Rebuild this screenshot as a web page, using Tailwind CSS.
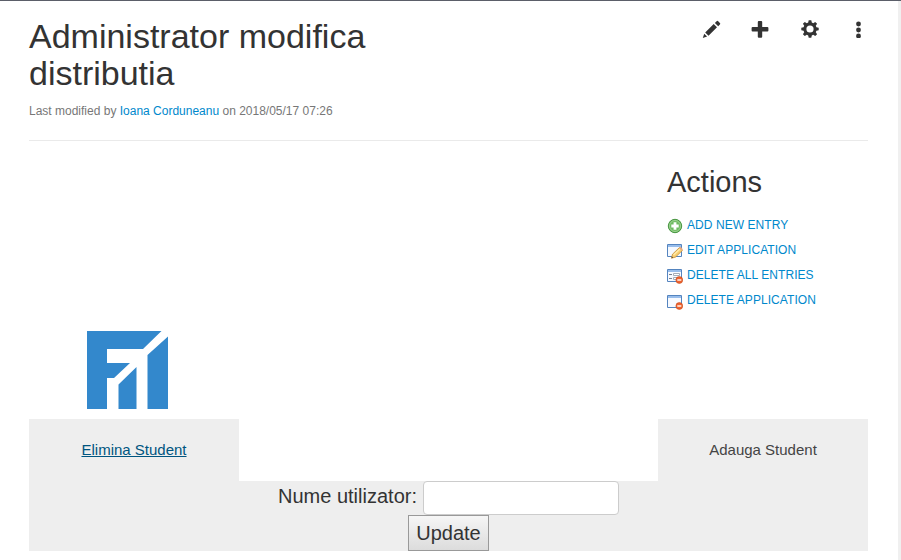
<!DOCTYPE html>
<html lang="ro">
<head>
<meta charset="utf-8">
<title>Administrator modifica distributia</title>
<script src="https://cdn.jsdelivr.net/npm/@tailwindcss/browser@4"></script>
</head>
<body class="h-[560px] w-[901px] overflow-hidden bg-white font-['Liberation_Sans',Arial,sans-serif] text-[15px] text-[#333]">
<div class="h-[560px] border-t border-[#5b5e69] flex">
<main class="w-[898px] shrink-0 pl-[29px] pr-[30px]">
  <header class="flex h-[140px] justify-between border-b border-[#eaeaea] pt-[17px]">
    <div class="w-[380px]">
      <h1 class="text-[34px] leading-[37px] [font-variant-ligatures:none]">Administrator modifica distributia</h1>
      <p class="mt-[11px] text-[12px] leading-[17px] text-[#777] whitespace-nowrap [font-variant-ligatures:none]">Last modified by <a href="#" class="text-[#0088cc]">Ioana Corduneanu</a> on 2018/05/17 07:26</p>
    </div>
    <nav class="flex h-[22px] items-center text-[#333]">
      <svg class="mr-[30px] h-5 w-5" viewBox="0 0 20 20" fill="currentColor"><path d="M1.800 19 3.200 14.700 6.100 17.600ZM4.200 13.400 12.700 5 16 8.300 7.500 16.700ZM13.900 3.900 15.600 2.200Q16.400 1.400 17.200 2.200L18.900 3.900Q19.700 4.700 18.900 5.500L17.200 7.200Z"/></svg>
      <svg class="mr-[32px] h-[18px] w-[18px]" viewBox="0 0 18 18" fill="currentColor"><path d="M7.800 1h2.400q1 0 1 1v5.100h5.200q1 0 1 1v2.500q0 1-1 1h-5.200v5.200q0 1-1 1H7.800q-1 0-1-1v-5.200H1.600q-1 0-1-1V8.100q0-1 1-1h5.200V2q0-1 1-1Z"/></svg>
      <svg class="mr-[31px] h-[18px] w-[18px]" viewBox="0 0 18 18" fill="currentColor" fill-rule="evenodd"><path d="M7.700.3h2.600l.5 2.300 1.400.6 2-1.300 1.900 1.900-1.300 2 .6 1.400 2.300.5v2.600l-2.300.5-.6 1.400 1.300 2-1.900 1.900-2-1.300-1.400.6-.5 2.300H7.700l-.5-2.300-1.400-.6-2 1.300-1.900-1.900 1.300-2-.6-1.400-2.300-.5V7.700l2.300-.5.6-1.400-1.300-2 1.900-1.900 2 1.300 1.400-.6ZM9 5.400a3.600 3.600 0 1 0 0 7.200 3.600 3.600 0 0 0 0-7.200Z"/></svg>
      <svg class="h-[18px] w-[18px]" viewBox="0 0 18 18" fill="currentColor"><circle cx="8.500" cy="4" r="2.400"/><circle cx="8.500" cy="10" r="2.400"/><circle cx="8.500" cy="16" r="2.400"/></svg>
    </nav>
  </header>

  <section class="flex h-[278px]">
    <div class="flex w-[210px] items-end pb-[9px] pl-[58px]">
      <svg class="h-[80px] w-[82px]" viewBox="87 330 82 80" fill="#3388cc"><path d="M87 331h74.500L143 349h-36v14h23l-16 15h-7v31H87ZM118.500 384.500 136.500 367v42h-18ZM147.500 355 168 336.500V409h-20.500Z"/></svg>
    </div>
    <aside class="ml-[428px] pt-[23px]">
      <h2 class="text-[29px] leading-[36px]">Actions</h2>
      <ul class="mt-[12.600px] text-[12px] leading-[25.3px] tracking-[0.06px] text-[#0088cc] whitespace-nowrap">
        <li class="flex h-[25.3px] items-center gap-[4px]">
          <svg class="mt-[1px] h-4 w-4" viewBox="0 0 16 16"><circle cx="8" cy="8" r="6.700" fill="#6fbb62" stroke="#489541"/><circle cx="8" cy="8" r="5.500" fill="none" stroke="#9ed293"/><path d="M6.600 4.300h2.800v2.300h2.300v2.800H9.400v2.300H6.600V9.400H4.300V6.600h2.300Z" fill="#fff"/></svg>
          <a href="#">ADD NEW ENTRY</a></li>
        <li class="flex h-[25.3px] items-center gap-[4px]">
          <svg class="mt-[1px] h-4 w-4" viewBox="0 0 16 16"><path d="M.5 1.500h14v12H.5Z" fill="#f5f9ff" stroke="#5484bf"/><path d="M1 2h13v2H1Z" fill="#98bdeb"/><path d="m4.500 15.200 1-4 7-6.700 3 2.800-7 6.800Z" fill="#f8cf72" stroke="#c58b33" stroke-width=".8"/><path d="m6.500 12 6.500-6" stroke="#ffedae" stroke-width="1.300"/><path d="m12 5 1.500-1.200 2.400 2.400-1.400 1.300Z" fill="#e7a77f"/><path d="m4.500 15.200.4-1.800 1.400 1.300Z" fill="#554a3c"/></svg>
          <a href="#">EDIT APPLICATION</a></li>
        <li class="flex h-[25.3px] items-center gap-[4px]">
          <svg class="mt-[1px] h-4 w-4" viewBox="0 0 16 16"><path d="M.5 1.500h14v12H.5Z" fill="#f7faff" stroke="#5484bf"/><path d="M1 2h13v2H1Z" fill="#98bdeb"/><path d="M2 6.500h3M2 10.500h3" stroke="#77818f"/><path d="M6.500 5.500h6v2h-6ZM6.500 9.500h4v2h-4Z" fill="#fff" stroke="#a5adb8"/><circle cx="12.300" cy="12" r="3.400" fill="#ee6331" stroke="#c34b19" stroke-width=".6"/><path d="M10.300 12h4" stroke="#fff" stroke-width="1.400"/></svg>
          <a href="#">DELETE ALL ENTRIES</a></li>
        <li class="flex h-[25.3px] items-center gap-[4px]">
          <svg class="mt-[1px] h-4 w-4" viewBox="0 0 16 16"><path d="M.5 1.500h14v12H.5Z" fill="#f7faff" stroke="#5484bf"/><path d="M1 2h13v2H1Z" fill="#98bdeb"/><circle cx="12.300" cy="12" r="3.400" fill="#ee6331" stroke="#c34b19" stroke-width=".6"/><path d="M10.300 12h4" stroke="#fff" stroke-width="1.400"/></svg>
          <a href="#">DELETE APPLICATION</a></li>
      </ul>
    </aside>
  </section>

  <section class="w-[839px] bg-[#eee]">
    <div class="grid h-[62px] grid-cols-[210px_419px_210px] text-center leading-[62px]">
      <a href="#" class="text-[#005580] underline">Elimina Student</a>
      <div class="bg-white"></div>
      <a href="#" class="text-[#444]">Adauga Student</a>
    </div>
    <form class="flex h-[70px] flex-col items-center text-[20px]">
      <div class="flex h-[34px] items-start gap-[6px]">
        <label for="user" class="leading-[30px]">Nume utilizator:</label>
        <input id="user" type="text" class="h-[34px] w-[196px] rounded-[4px] border border-[#ccc] bg-white px-2">
      </div>
      <button type="button" class="h-[36px] w-[81px] border border-[#999] bg-linear-to-b from-[#f6f6f6] to-[#dcdcdc] text-center leading-[33px]">Update</button>
    </form>
  </section>
</main>
<div class="w-[3px] shrink-0 bg-[#f0f0f0]"></div>
</div>
</body>
</html>
